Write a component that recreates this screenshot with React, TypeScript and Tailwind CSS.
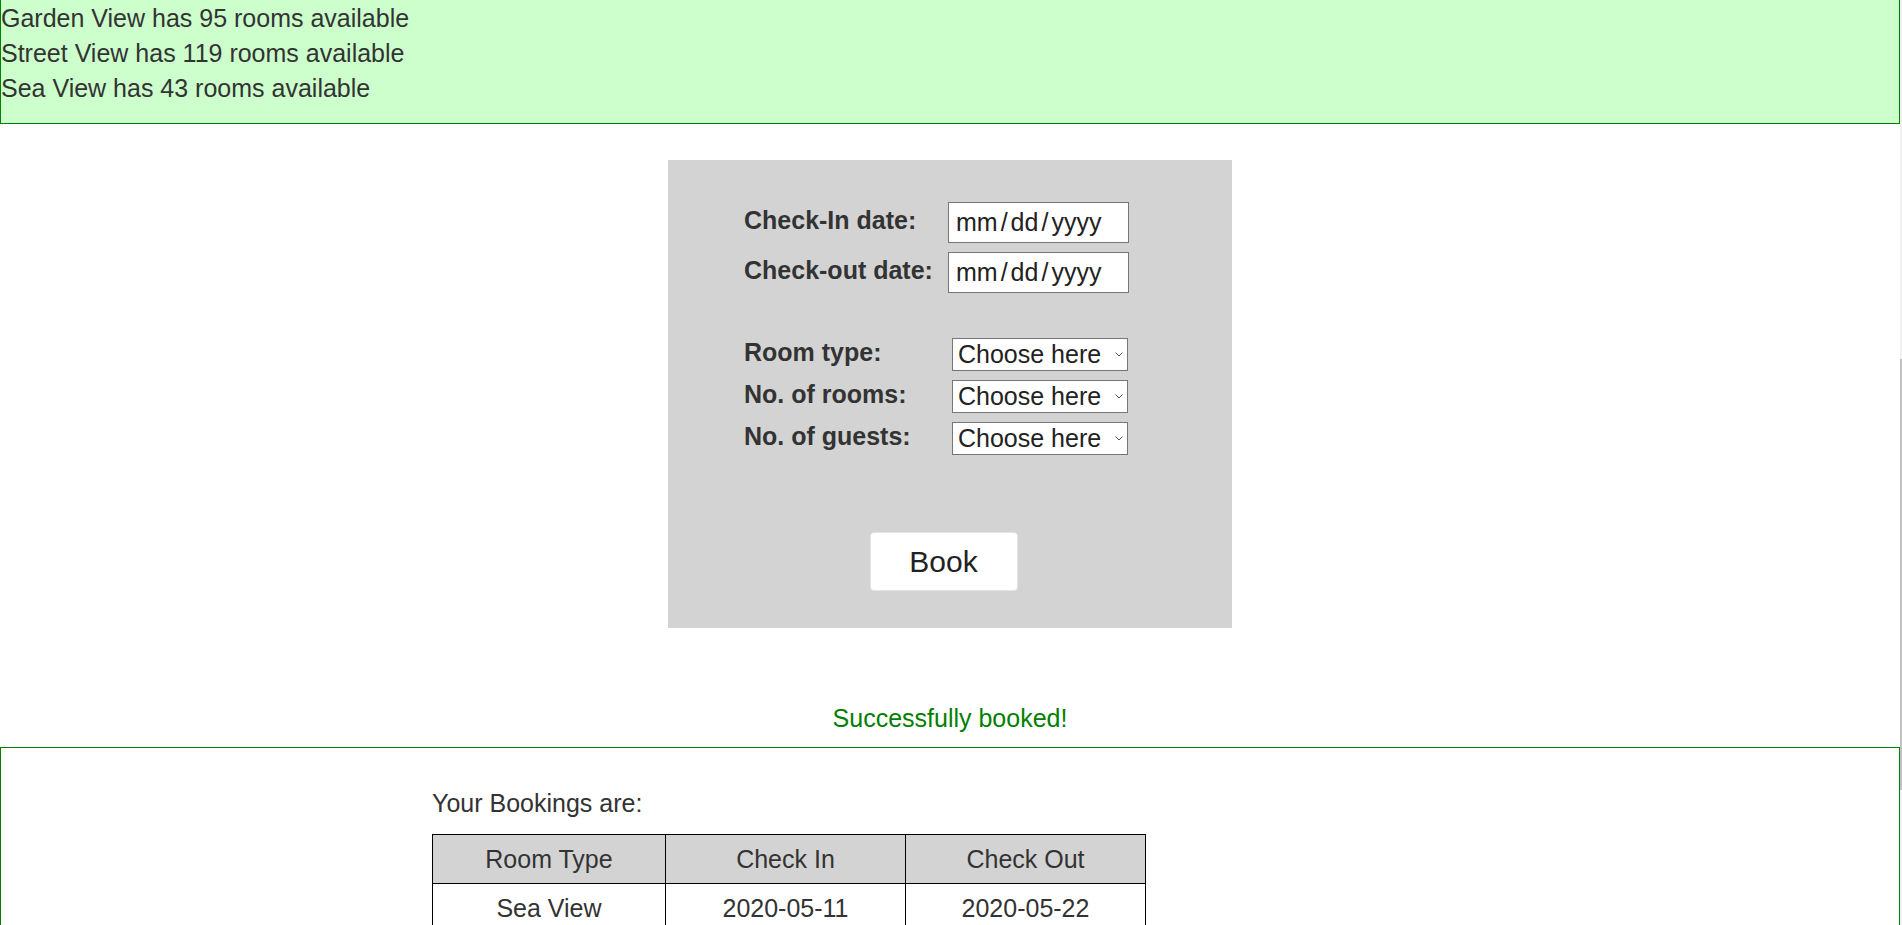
import React from "react";

function Chevron() {
  return (
    <svg width="8" height="5" viewBox="0 0 8 5" className="shrink-0">
      <polyline points="0.5,0.5 4,4 7.5,0.5" fill="none" stroke="#555" strokeWidth="1" />
    </svg>
  );
}

function DateField() {
  return (
    <div className="w-[181px] h-[41px] border border-[#767676] bg-white flex items-center pl-[7px] text-[25px] leading-[29px] text-[#222]">
      <span>mm</span>
      <span className="mx-[3px]">/</span>
      <span>dd</span>
      <span className="mx-[3px]">/</span>
      <span>yyyy</span>
    </div>
  );
}

function SelectField() {
  return (
    <div className="w-[176px] h-[33px] border border-[#767676] bg-white flex items-center justify-between pl-[5px] pr-[4px] text-[25px] leading-[29px] text-[#222]">
      <span>Choose here</span>
      <Chevron />
    </div>
  );
}

export default function App() {
  return (
    <div className="flex w-full h-[925px] overflow-hidden bg-white font-['Liberation_Sans',Arial,sans-serif] text-[#333]">
      <div className="flex-1 min-w-0 flex flex-col">
        <div className="bg-[#ccffcc] border-x border-b border-[#008000] pt-[1px] pb-[17px] text-[25px] leading-[35px]">
          <div>Garden View has 95 rooms available</div>
          <div>Street View has 119 rooms available</div>
          <div>Sea View has 43 rooms available</div>
        </div>

        <div className="mt-[36px] mx-auto w-[564px] h-[468px] shrink-0 bg-[#d3d3d3] pt-[42px] flex flex-col">
          <div className="flex flex-col gap-[9px] pl-[76px]">
            <div className="flex items-start">
              <div className="w-[204px] pt-[4px] text-[25px] leading-[29px] font-bold">Check-In date:</div>
              <DateField />
            </div>
            <div className="flex items-start">
              <div className="w-[204px] pt-[4px] text-[25px] leading-[29px] font-bold">Check-out date:</div>
              <DateField />
            </div>
          </div>

          <div className="mt-[45px] flex flex-col gap-[9px] pl-[76px]">
            <div className="flex items-start">
              <div className="w-[208px] text-[25px] leading-[29px] font-bold">Room type:</div>
              <SelectField />
            </div>
            <div className="flex items-start">
              <div className="w-[208px] text-[25px] leading-[29px] font-bold">No. of rooms:</div>
              <SelectField />
            </div>
            <div className="flex items-start">
              <div className="w-[208px] text-[25px] leading-[29px] font-bold">No. of guests:</div>
              <SelectField />
            </div>
          </div>

          <div className="mt-[77px] flex justify-center pr-[13px]">
            <button className="w-[148px] h-[59px] bg-white rounded-[4px] border border-[#e4e4e4] text-[30px] leading-[34px] text-[#222]">
              Book
            </button>
          </div>
        </div>

        <div className="mt-[76px] text-center text-[25px] leading-[29px] text-[#008000]">Successfully booked!</div>

        <div className="mt-[14px] flex-1 border-x border-t border-[#008000] pl-[431px] pt-[41px]">
          <div className="text-[25px] leading-[29px]">Your Bookings are:</div>
          <table className="mt-[16px] border-collapse text-[25px] leading-[29px]">
            <thead>
              <tr>
                <th className="w-[233px] h-[49px] p-0 border border-black bg-[#d3d3d3] font-normal">Room Type</th>
                <th className="w-[240px] h-[49px] p-0 border border-black bg-[#d3d3d3] font-normal">Check In</th>
                <th className="w-[240px] h-[49px] p-0 border border-black bg-[#d3d3d3] font-normal">Check Out</th>
              </tr>
            </thead>
            <tbody>
              <tr>
                <td className="h-[49px] p-0 border border-black text-center">Sea View</td>
                <td className="h-[49px] p-0 border border-black text-center">2020-05-11</td>
                <td className="h-[49px] p-0 border border-black text-center">2020-05-22</td>
              </tr>
            </tbody>
          </table>
        </div>
      </div>
      <div className="w-[2px] shrink-0 flex flex-col">
        <div className="h-[359px] bg-[#f1f1f1]" />
        <div className="h-[431px] bg-[#c1c1c1]" />
        <div className="flex-1 bg-[#f1f1f1]" />
      </div>
    </div>
  );
}
